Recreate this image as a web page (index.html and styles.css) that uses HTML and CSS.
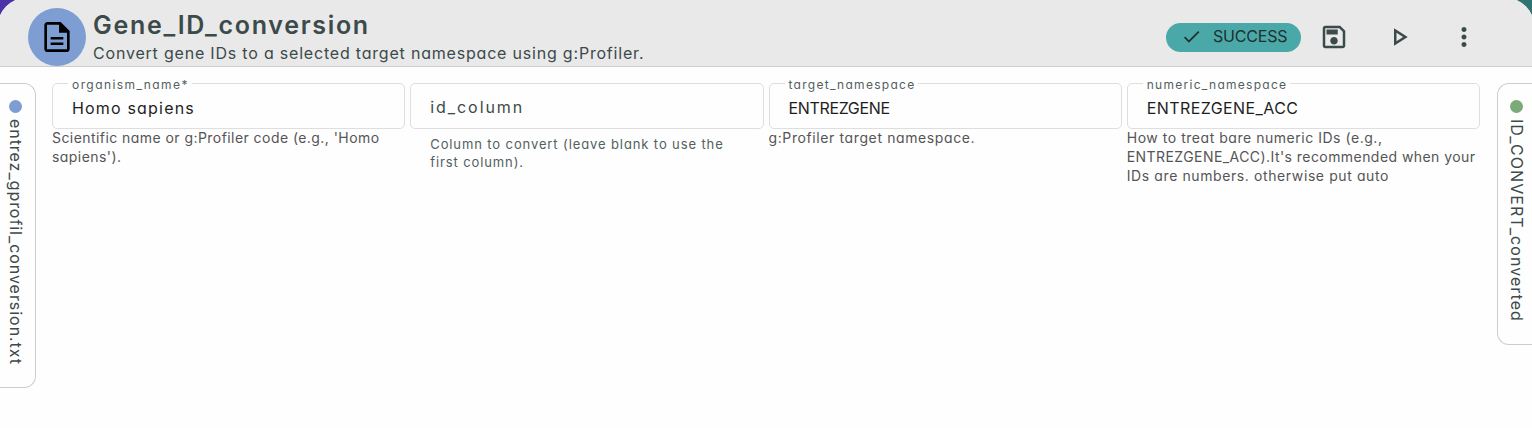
FILE: index.html
```
<!DOCTYPE html>
<html lang="en">
<head>
<meta charset="utf-8">
<title>Gene_ID_conversion</title>
<link rel="stylesheet" href="styles.css">
</head>
<body>
<main class="card">
  <header class="header">
    <div class="avatar">
      <svg width="38" height="38" viewBox="0 0 24 24"><path d="M8 15.500h8v1.500H8zM8 12h8v1.500H8zM14.300 2.500H6c-1.100 0-2 .9-2 2v15c0 1.100.9 2 2 2h12c1.100 0 2-.9 2-2V8.200zM18.300 19.800H5.700V4.200h7.600V9.300h5z"/></svg>
    </div>
    <div class="heading">
      <h1 class="title">Gene_ID_conversion</h1>
      <p class="subtitle">Convert gene IDs to a selected target namespace using g:Profiler.</p>
    </div>
    <div class="status">
      <svg width="24" height="24" viewBox="0 0 24 24"><path d="M9 16.170 4.830 12l-1.420 1.410L9 19 21 7l-1.410-1.410z"/></svg>
      <span>SUCCESS</span>
    </div>
    <button class="action save" aria-label="Save"><svg width="30" height="30" viewBox="0 0 24 24"><path d="M17 3H5c-1.110 0-2 .9-2 2v14c0 1.100.89 2 2 2h14c1.100 0 2-.9 2-2V7zm2 16H5V5h11.170L19 7.830zm-7-7c-1.660 0-3 1.340-3 3s1.340 3 3 3 3-1.340 3-3-1.340-3-3-3M6 6h9v4H6z"/></svg></button>
    <button class="action play" aria-label="Run"><svg width="30" height="30" viewBox="0 0 24 24"><path d="M10 8.640 15.270 12 10 15.360zM8 5v14l11-7z"/></svg></button>
    <button class="action more" aria-label="More"><svg width="30" height="30" viewBox="0 0 24 24"><path d="M12 8c1.100 0 2-.9 2-2s-.9-2-2-2-2 .9-2 2 .9 2 2 2m0 2c-1.100 0-2 .9-2 2s.9 2 2 2 2-.9 2-2-.9-2-2-2m0 6c-1.100 0-2 .9-2 2s.9 2 2 2 2-.9 2-2-.9-2-2-2"/></svg></button>
  </header>
  <div class="content">
    <aside class="port input"><i class="dot"></i><span class="port-name">entrez_gprofil_conversion.txt</span></aside>
    <section class="fields">
      <div class="field">
        <div class="box"><span class="label organism">organism_name*</span><span class="value">Homo sapiens</span></div>
        <p class="hint">Scientific name or g:Profiler code (e.g., 'Homo<br>sapiens').</p>
      </div>
      <div class="field">
        <div class="box"><span class="placeholder">id_column</span></div>
        <p class="hint inset">Column to convert (leave blank to use the<br>first column).</p>
      </div>
      <div class="field">
        <div class="box"><span class="label">target_namespace</span><span class="value caps">ENTREZGENE</span></div>
        <p class="hint target">g:Profiler target namespace.</p>
      </div>
      <div class="field">
        <div class="box"><span class="label">numeric_namespace</span><span class="value acc">ENTREZGENE_ACC</span></div>
        <p class="hint numeric"><span class="first">How to treat bare numeric IDs (e.g.,</span><br>ENTREZGENE_ACC).It's recommended when your<br><span class="last">IDs are numbers. otherwise put auto</span></p>
      </div>
    </section>
    <aside class="port output"><i class="dot"></i><span class="port-name">ID_CONVERT_converted</span></aside>
  </div>
</main>
</body>
</html>
```
FILE: styles.css
```
* { box-sizing: border-box; }
html, body { height: 100%; overflow: hidden; }
body {
  margin: 0;
  background: linear-gradient(90deg, #4b32a8 50%, #2f7373 50%);
  color: #3c4a49;
  font-family: Inter, "Open Sans", sans-serif;
  font-feature-settings: "cv11";
  font-weight: 400;
}
h1, p { margin: 0; white-space: nowrap; }
.card {
  width: 1538px;
  height: 440px;
  margin: -3px;
  overflow: hidden;
  border-radius: 32px 32px 0 0;
  background: #fefefe;
}
.header {
  display: flex;
  align-items: center;
  height: 70px;
  padding: 10px 56px 0 31px;
  border-bottom: 1px solid #cdcdcd;
  background: #e9e9e9;
}
.avatar {
  display: grid;
  place-items: center;
  width: 58px;
  height: 58px;
  flex: none;
  border-radius: 50%;
  background: #7d9dd3;
}
.heading { flex: 1; margin-left: 7px; }
.title { font-size: 25px; line-height: 32px; font-weight: 600; letter-spacing: 1.7px; }
.subtitle { font-size: 16px; line-height: 24px; letter-spacing: .8px; }
.status {
  display: flex;
  align-items: center;
  gap: 11px;
  width: 135px;
  height: 29px;
  margin-top: 1px;
  padding-left: 15px;
  border-radius: 15px;
  background: #4aa8a8;
  color: #20302f;
  font-size: 16px;
  line-height: 28px;
  letter-spacing: -.2px;
}
.status span { padding-bottom: 2px; }
.status svg { width: 21px; height: 21px; margin-bottom: 1px; }
svg { display: block; fill: currentColor; }
.avatar svg { fill: #000; }
.action {
  display: grid;
  place-items: center;
  width: 30px;
  height: 30px;
  padding: 0;
  border: 0;
  background: none;
  color: #3c4a49;
}
.save { margin-left: 18px; }
.play { margin-left: 35px; }
.more { margin-left: 35px; }
.content { display: flex; align-items: flex-start; padding: 16px 3px 0; }
.port {
  display: flex;
  flex: none;
  flex-direction: column;
  align-items: center;
  gap: 6px;
  width: 36px;
  padding-top: 16px;
  border: 1px solid #cdcdcd;
}
.input { height: 305px; border-left: 0; border-radius: 0 12px 12px 0; padding-right: 4px; }
.output { height: 262px; width: 35px; margin-left: 17px; border-right: 0; border-radius: 12px 0 0 12px; padding-left: 3px; }
.dot { flex: none; width: 13px; height: 13px; border-radius: 50%; background: #7d9dd3; }
.output .dot { background: #7aab78; }
.port-name {
  writing-mode: vertical-rl;
  font-size: 16px;
  line-height: 24px;
  letter-spacing: .95px;
  white-space: nowrap;
}
.output .port-name { letter-spacing: 1.05px; }
.fields { display: grid; grid-template-columns: repeat(4, 1fr); gap: 5px; width: 1428px; margin-left: 16px; }
.box {
  position: relative;
  height: 46px;
  padding: 12px 19px 0;
  border: 1px solid #dedede;
  border-radius: 5px;
}
.label {
  position: absolute;
  top: -9px;
  left: 15px;
  padding: 0 3px 0 4px;
  background: #fefefe;
  color: #526060;
  font-size: 12px;
  line-height: 20px;
  letter-spacing: 1.28px;
}
.organism { letter-spacing: 1.43px; }
.value { display: block; color: #1e1e1e; font-size: 16px; line-height: 24px; letter-spacing: 1.18px; }
.caps { letter-spacing: -.35px; }
.acc { letter-spacing: .42px; }
.placeholder { display: block; font-size: 16px; line-height: 22px; letter-spacing: 1.94px; }
.hint { margin-top: -1px; color: #555; font-size: 14px; line-height: 19px; letter-spacing: .44px; }
.inset { margin: 6px 0 0 20px; color: #526060; font-size: 13px; line-height: 18px; letter-spacing: .89px; }
.target { letter-spacing: .61px; }
.numeric { letter-spacing: .44px; }
.first { letter-spacing: .53px; }
.last { letter-spacing: .6px; }
```
